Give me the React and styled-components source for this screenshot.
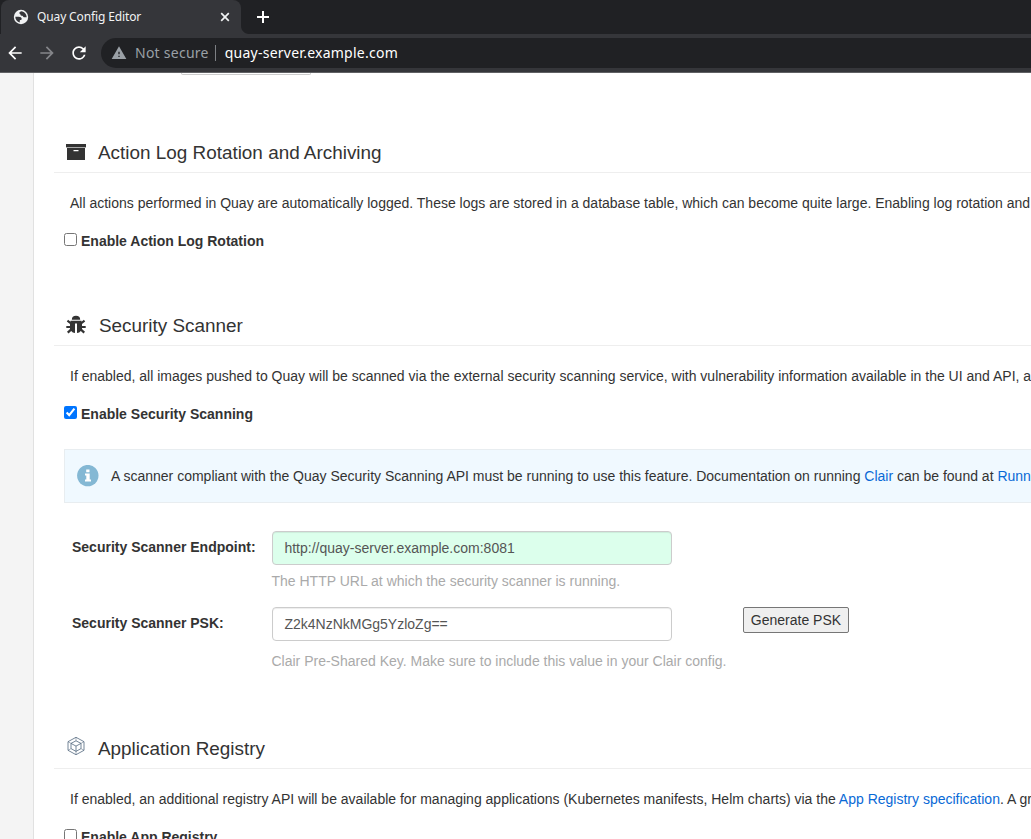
import React from "react";
import styled, { createGlobalStyle } from "styled-components";
import { MdArrowBack, MdArrowForward, MdRefresh, MdWarning } from "react-icons/md";

const GlobalStyle = createGlobalStyle`
  * { box-sizing: border-box; }
  html, body { margin: 0; height: 100%; overflow: hidden; }
  body {
    background: #fff;
    color: #333;
    font: 14px/20px "Liberation Sans", Arial, sans-serif;
  }
`;

const Window = styled.div`
  display: flex;
  flex-direction: column;
  height: 839px;
  overflow: hidden;
  white-space: nowrap;
`;

const TabStrip = styled.div`
  display: flex;
  height: 34px;
  flex: none;
  background: #202124;
  font-family: "Noto Sans", sans-serif;
`;

const Tab = styled.div`
  display: flex;
  align-items: center;
  width: 240px;
  margin-left: 1px;
  padding: 0 11px 0 12px;
  border-radius: 8px 8px 0 0;
  background: #35363a;
  color: #f1f3f4;
  font-size: 12px;
  svg { flex: none; }
`;

const TabTitle = styled.span`
  flex: 1;
  margin-left: 8px;
  letter-spacing: -0.13px;
`;

const TabEnd = styled.div`
  width: 8px;
  height: 8px;
  align-self: flex-end;
  background: radial-gradient(circle at 100% 0, #202124 7.5px, #35363a 8.500px);
`;

const NewTab = styled.div`
  display: flex;
  align-items: center;
  margin-left: 8px;
`;

const Toolbar = styled.div`
  display: flex;
  align-items: center;
  height: 39px;
  flex: none;
  padding-left: 5px;
  background: #35363a;
  border-bottom: 1px solid #606164;
  color: #fff;
  svg { flex: none; margin-right: 12px; }
`;

const Address = styled.div`
  display: flex;
  align-items: center;
  flex: 1;
  height: 30px;
  padding-left: 10px;
  border-radius: 15px 0 0 15px;
  background: #202124;
  color: #fff;
  font: 14px/20px "Noto Sans", sans-serif;
  letter-spacing: 0.25px;
  svg { margin-right: 8px; color: #9aa0a6; }
`;

const Muted = styled.span`
  color: #9aa0a6;
`;

const Divider = styled.span`
  width: 1px;
  height: 16px;
  margin: 0 9px 0 6px;
  background: #7d8084;
`;

const Viewport = styled.div`
  display: flex;
  flex: 1;
  min-height: 0;
  background: #f4f4f4;
`;

const Panel = styled.main`
  flex: 1;
  min-width: 0;
  overflow: hidden;
  margin-left: 33px;
  padding-left: 20px;
  border-left: 1px solid #e1e1e1;
  background: #fff;
`;

const PreviousField = styled.div`
  width: 130px;
  height: 2px;
  margin-left: 127px;
  border: 1px solid #ccc;
  border-top: 0;
  border-radius: 0 0 3px 3px;
`;

const Section = styled.section`
  height: ${(p) => p.$height}px;
`;

const Heading = styled.h2`
  display: flex;
  align-items: center;
  height: 41px;
  margin: 0;
  padding-left: ${(p) => p.$inset || 11}px;
  border-bottom: 1px solid #eee;
  font-size: 18.9px;
  font-weight: 400;
  line-height: 40px;
  svg { flex: none; margin-right: ${(p) => p.$gap || 11}px; }
`;

const HeadingText = styled.span`
  padding-top: 2px;
`;

const Description = styled.p`
  height: 20px;
  margin: 20px 0 18px;
  padding-left: 16px;
`;

const CheckRow = styled.label`
  display: flex;
  height: 20px;
  padding-left: 10px;
  font-weight: 700;
`;

const Checkbox = styled.input`
  width: 13px;
  height: 13px;
  margin: 2px 4px 0 0;
`;

const Link = styled.span`
  color: #0969d6;
`;

const Notice = styled.div`
  display: flex;
  align-items: center;
  height: 54px;
  margin: 25px 0 28px 10px;
  padding-left: 12px;
  border: 1px solid #e8edf0;
  border-right: 0;
  background: #f0f9ff;
  svg { flex: none; margin-right: 12px; }
`;

const Field = styled.div`
  display: grid;
  grid-template-columns: 200px 400px auto;
  padding-left: 18px;
  height: ${(p) => p.$height}px;
`;

const FieldLabel = styled.label`
  padding-top: 6px;
  font-weight: 700;
`;

const TextInput = styled.input`
  display: block;
  width: 400px;
  height: 34px;
  padding: 6px 11.4px;
  border: 1px solid #ccc;
  border-radius: 4px;
  background: ${(p) => (p.$valid ? "#dcffec" : "#fff")};
  box-shadow: inset 0 1px 1px rgba(0, 0, 0, 0.075);
  color: #555;
  font: inherit;
`;

const Help = styled.div`
  margin: ${(p) => p.$gap}px 0 0 -0.5px;
  color: #aaa;
`;

const Button = styled.button`
  justify-self: start;
  width: 106px;
  height: 26px;
  margin-left: 71px;
  padding: 0;
  border: 1px solid #767676;
  border-radius: 2px;
  background: #efefef;
  color: #333;
  font: inherit;
`;

function GlobeIcon() {
  return (
    <svg width="16" height="16" viewBox="0 0 16 16">
      <circle cx="8" cy="8" r="7.200" fill="#f1f3f4" />
      <path
        fill="#35363a"
        d="M8.800 2.300c-1.700.2-2.600 1-2.400 2 .1.700 1.200.7 1.100 1.500-.1.900 1 .8 1.800 1 .9.300.7 1.400 1.700 1.400h2.700c-.1-2.700-1.900-5-4.300-5.700z"
      />
      <path
        fill="#35363a"
        d="M2.300 7.800h3.500c1.700 0 2.800.7 2.900 2 .1.900-.5 1.200-1.400 1.200-.7 0-.5.900-.5 2.500C4.200 13 2.300 10.700 2.300 7.800z"
      />
    </svg>
  );
}

function CloseIcon() {
  return (
    <svg width="10" height="10" viewBox="0 0 10 10" stroke="#f1f3f4" strokeWidth="1.700">
      <path d="m1.200 1.200 7.600 7.600M8.800 1.200 1.200 8.800" />
    </svg>
  );
}

function PlusIcon() {
  return (
    <svg width="12" height="12" viewBox="0 0 12 12" stroke="#fff" strokeWidth="2">
      <path d="M6 0v12M0 6h12" />
    </svg>
  );
}

function ArchiveIcon() {
  return (
    <svg width="22" height="20" viewBox="0 0 22 20" fill="#333">
      <path d="M1 2h20v3H1z" />
      <path d="M1 5h20v1H1z" fill="#aaa" />
      <path fillRule="evenodd" d="M2 6h18v12H2zM8.500 8v1.200h5V8z" />
    </svg>
  );
}

function BugIcon() {
  return (
    <svg width="22" height="20" viewBox="0 0 22 20" fill="#333">
      <path d="M6.800 4.700a4.200 3.900 0 0 1 8.400 0z" />
      <path d="M5.500 5.700h11v1l2.400-1.900 1.300 1.600-3.200 2.500V11h3.700v2.100H17v.8l3 2.900-1.500 1.600-2.700-2.500Q14.500 18 12 18V8.500h-2V18q-2.500 0-3.800-2.100l-2.700 2.500L2 16.800l3-2.900v-.8H1.300V11H5V8.900L1.800 6.400l1.300-1.600 2.400 1.900z" />
    </svg>
  );
}

function AppsIcon() {
  return (
    <svg width="20" height="24" viewBox="0 0 20 24" fill="none" stroke="#52677d" strokeWidth=".8" strokeLinejoin="round">
      <path d="M10 1.300 18 5.700v8.600l-8 4.400-8-4.400V5.700z" />
      <path d="m10 4.800 5 2.600v5.200l-5 2.800-5-2.800V7.400zM5 7.400l5 2.700 5-2.700M10 10.100v5.300" />
      <path d="M10 1.300v3.500M2 5.700l3 1.700M18 5.700l-3 1.700M2 14.300l3-1.700M18 14.300l-3-1.700M10 15.400v3.300" strokeWidth=".5" />
    </svg>
  );
}

function InfoIcon() {
  return (
    <svg width="22" height="22" viewBox="0 0 22 22">
      <circle cx="10.800" cy="10.600" r="10.700" fill="#84b8d4" />
      <path fill="#fff" d="M9.200 4.500h3.300v2.700H9.200zM8 8.500h4.700v6H14v2H8v-2h1.300v-4H8z" />
    </svg>
  );
}

export default function App() {
  return (
    <>
      <GlobalStyle />
      <Window>
        <TabStrip>
          <Tab>
            <GlobeIcon />
            <TabTitle>Quay Config Editor</TabTitle>
            <CloseIcon />
          </Tab>
          <TabEnd />
          <NewTab><PlusIcon /></NewTab>
        </TabStrip>
        <Toolbar>
          <MdArrowBack size={20} />
          <MdArrowForward size={20} color="#85868a" />
          <MdRefresh size={20} />
          <Address>
            <MdWarning size={16} />
            <Muted>Not secure</Muted>
            <Divider />
            <span>quay-server.example.com</span>
          </Address>
        </Toolbar>
        <Viewport>
          <Panel>
            <PreviousField />
            <Section $height={57} />
            <Section $height={173}>
              <Heading>
                <ArchiveIcon />
                <HeadingText>Action Log Rotation and Archiving</HeadingText>
              </Heading>
              <Description>
                All actions performed in Quay are automatically logged. These logs are stored in a database table, which can become quite large. Enabling log rotation and archiving
              </Description>
              <CheckRow><Checkbox type="checkbox" />Enable Action Log Rotation</CheckRow>
            </Section>
            <Section $height={423}>
              <Heading $gap={12}>
                <BugIcon />
                <HeadingText>Security Scanner</HeadingText>
              </Heading>
              <Description>
                If enabled, all images pushed to Quay will be scanned via the external security scanning service, with vulnerability information available in the UI and API, as well
              </Description>
              <CheckRow><Checkbox type="checkbox" defaultChecked />Enable Security Scanning</CheckRow>
              <Notice>
                <InfoIcon />
                <span>
                  A scanner compliant with the Quay Security Scanning API must be running to use this feature. Documentation on running <Link>Clair</Link> can be found at <Link>Running</Link>
                </span>
              </Notice>
              <Field $height={76}>
                <FieldLabel>Security Scanner Endpoint:</FieldLabel>
                <div>
                  <TextInput $valid defaultValue="http://quay-server.example.com:8081" />
                  <Help $gap={6}>The HTTP URL at which the security scanner is running.</Help>
                </div>
              </Field>
              <Field $height={80}>
                <FieldLabel>Security Scanner PSK:</FieldLabel>
                <div>
                  <TextInput defaultValue="Z2k4NzNkMGg5YzloZg==" />
                  <Help $gap={10}>Clair Pre-Shared Key. Make sure to include this value in your Clair config.</Help>
                </div>
                <Button>Generate PSK</Button>
              </Field>
            </Section>
            <Section $height={120}>
              <Heading $inset={12} $gap={12}>
                <AppsIcon />
                <HeadingText>Application Registry</HeadingText>
              </Heading>
              <Description>
                If enabled, an additional registry API will be available for managing applications (Kubernetes manifests, Helm charts) via the <Link>App Registry specification</Link>. A great
              </Description>
              <CheckRow><Checkbox type="checkbox" />Enable App Registry</CheckRow>
            </Section>
          </Panel>
        </Viewport>
      </Window>
    </>
  );
}
